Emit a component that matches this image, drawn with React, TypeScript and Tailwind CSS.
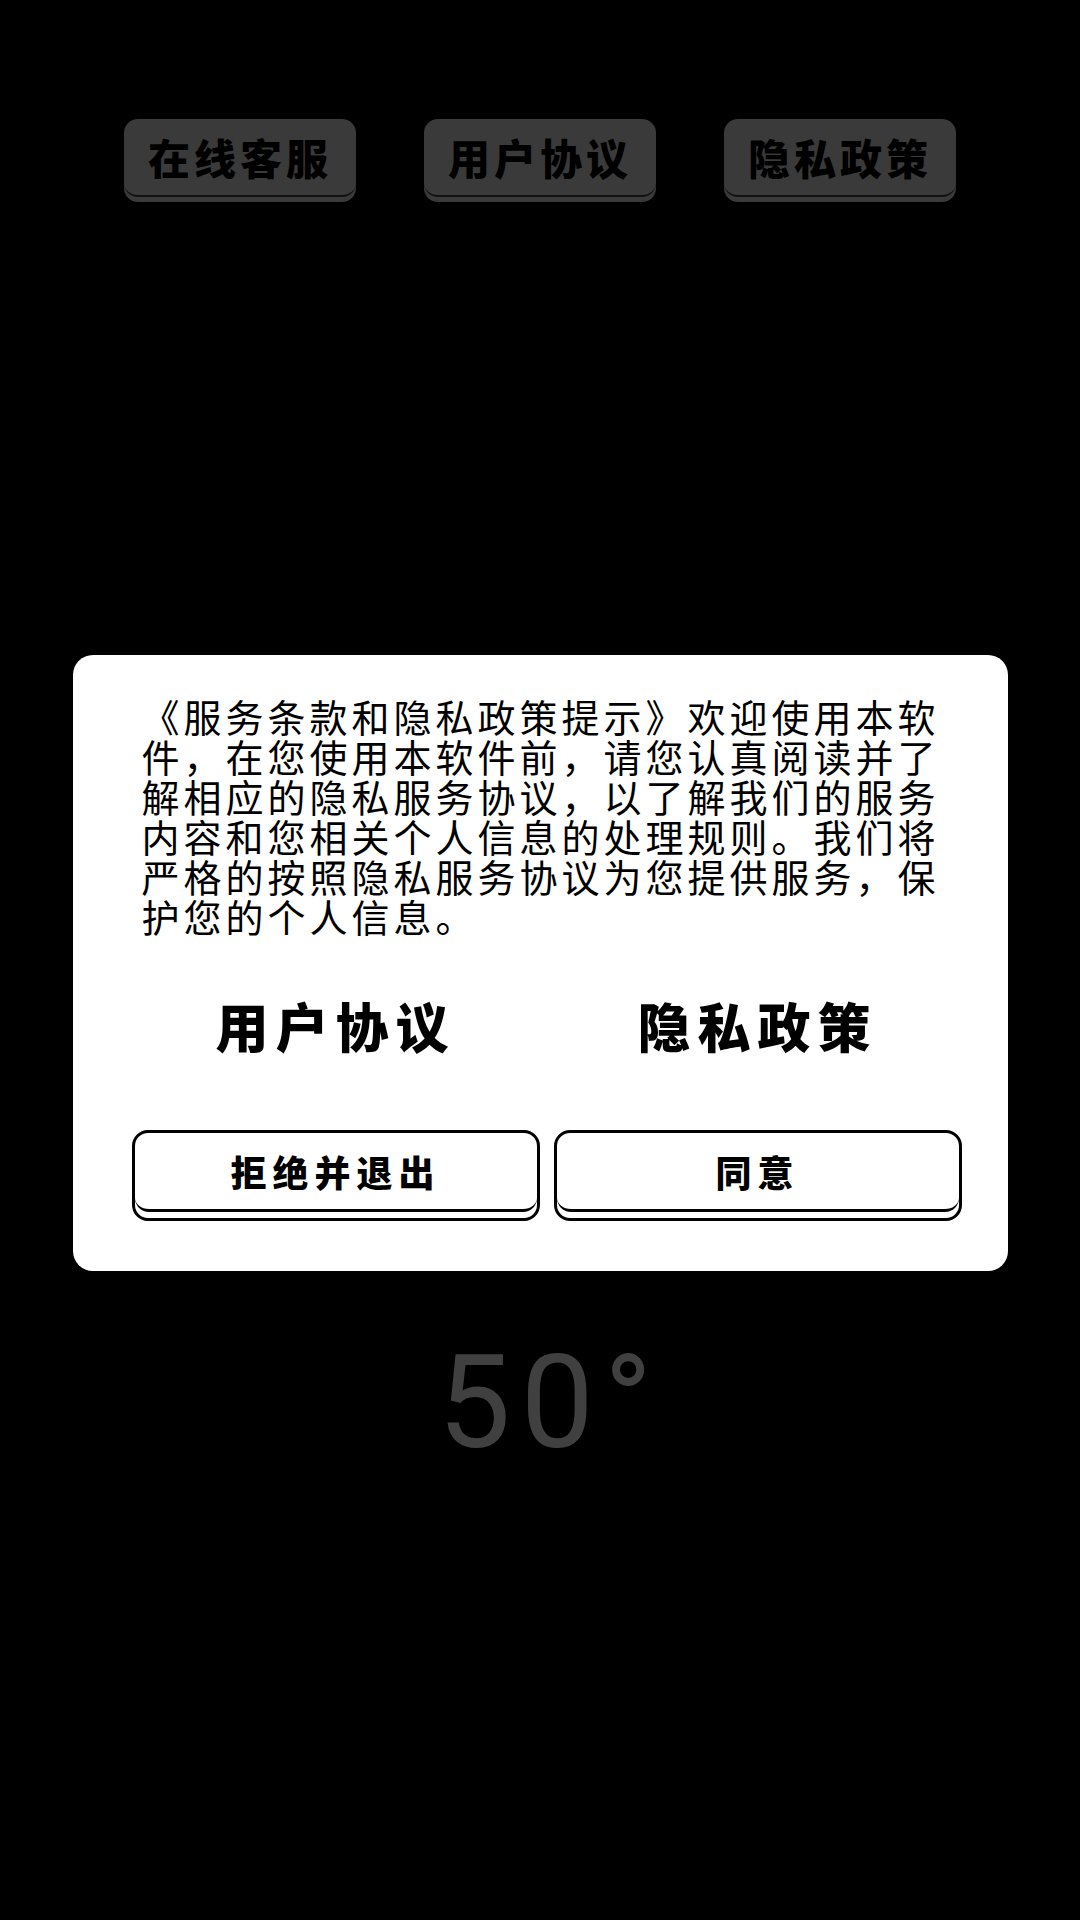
const topLinks = ['在线客服', '用户协议', '隐私政策'];

function TopButton({ label }: { label: string }) {
  return (
    <div className="w-[232px] rounded-[14px] bg-[#3a3a3a] pb-[5px]">
      <div className="flex h-[78px] items-center justify-center rounded-[14px] border-b-[2px] border-[#111]">
        <span className="text-[42px] font-black leading-none tracking-[4px] text-black">{label}</span>
      </div>
    </div>
  );
}

function DialogButton({ label }: { label: string }) {
  return (
    <button className="rounded-[16px] border-[3px] border-black bg-white pb-[6px]">
      <div className="flex h-[79px] items-center justify-center rounded-b-[14px] border-b-[3px] border-black">
        <span className="text-[36px] font-black leading-none tracking-[6px] text-black">{label}</span>
      </div>
    </button>
  );
}

export default function App() {
  return (
    <div className="flex h-[1920px] w-[1080px] flex-col items-center bg-black font-['Noto_Sans_CJK_SC','Noto_Sans',sans-serif]">
      {/* Top links */}
      <div className="mt-[119px] flex gap-[68px]">
        {topLinks.map((l) => (
          <TopButton key={l} label={l} />
        ))}
      </div>

      {/* Privacy dialog */}
      <div className="mt-[453px] w-[935px] rounded-[20px] bg-white pb-[50px] pt-[41px]">
        <p className="ml-[69px] w-[800px] text-[38px] leading-[40px] tracking-[4px] text-black">
          《服务条款和隐私政策提示》欢迎使用本软件，在您使用本软件前，请您认真阅读并了解相应的隐私服务协议，以了解我们的服务内容和您相关个人信息的处理规则。我们将严格的按照隐私服务协议为您提供服务，保护您的个人信息。
        </p>

        <div className="mt-[59px] grid grid-cols-2 gap-[14px] pl-[59px] pr-[46px]">
          <div className="text-center text-[53px] font-black leading-[60px] tracking-[7px] text-black">用户协议</div>
          <div className="text-center text-[53px] font-black leading-[60px] tracking-[7px] text-black">隐私政策</div>
        </div>

        <div className="mt-[75px] grid grid-cols-2 gap-[14px] pl-[59px] pr-[46px]">
          <DialogButton label="拒绝并退出" />
          <DialogButton label="同意" />
        </div>
      </div>

      {/* Temperature */}
      <div className="mt-[67px] pl-[20px] font-['Roboto',sans-serif] text-[130px] leading-none tracking-[10px] text-[#404040]">
        50°
      </div>
    </div>
  );
}
